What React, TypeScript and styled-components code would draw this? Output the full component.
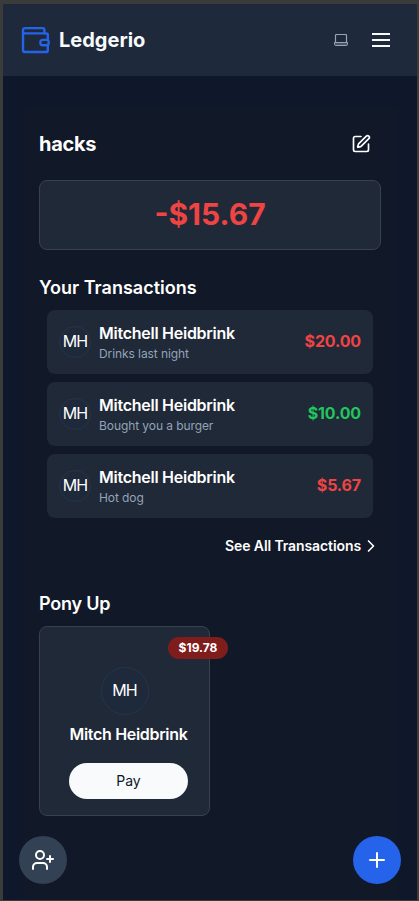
import React from "react";
import styled, { createGlobalStyle } from "styled-components";
import { ChevronRight, Plus, SquarePen, UserPlus } from "lucide-react";

const GlobalStyle = createGlobalStyle`
  * { box-sizing: border-box; }
  body { margin: 0; background: #3b3b3b; font-family: Inter, "Liberation Sans", sans-serif; color: #f8fafc; }
  button { font: inherit; border: 0; padding: 0; color: inherit; background: none; cursor: pointer; }
  h1, h2, p { margin: 0; }
`;

const Frame = styled.div`
  height: 901px;
  padding: 4px 2px 1px 3px;
  overflow: hidden;
`;

const Page = styled.div`
  height: 896px;
  background: #0f172a;
  display: flex;
  flex-direction: column;
`;

const Header = styled.header`
  flex: none;
  height: 72px;
  padding: 0 27px 0 18px;
  background: #1e293b;
  display: flex;
  align-items: center;
  justify-content: space-between;
`;

const Brand = styled.div`
  display: flex;
  align-items: center;
  gap: 9px;
`;

const Label = styled.span<{ $size: number; $weight?: number; $spacing?: number; $line?: number; $color?: string }>`
  display: block;
  white-space: nowrap;
  font-size: ${(p) => p.$size}px;
  font-weight: ${(p) => p.$weight ?? 400};
  letter-spacing: ${(p) => p.$spacing ?? 0}px;
  line-height: ${(p) => p.$line ?? 24}px;
  color: ${(p) => p.$color ?? "#ffffff"};
`;

const HeaderTools = styled.div`
  display: flex;
  align-items: center;
  gap: 24px;
`;

const Panel = styled.main`
  flex: 1;
  margin: 32px 20px 0;
  padding: 20px 16px 0;
  background: #111827;
`;

const TitleRow = styled.div`
  display: flex;
  align-items: center;
  justify-content: space-between;
  height: 32px;
  padding-right: 10px;
`;

const Balance = styled.div`
  height: 70px;
  margin-top: 20px;
  padding-bottom: 2px;
  border: 1px solid #374151;
  border-radius: 8px;
  background: #1f2937;
  display: flex;
  align-items: center;
  justify-content: center;
`;

const Section = styled.section<{ $gap: number }>`
  margin-top: ${(p) => p.$gap}px;
`;

const TransactionList = styled.div`
  margin-top: 8px;
  padding: 0 8px;
  display: grid;
  gap: 8px;
`;

const Transaction = styled.div`
  height: 64px;
  padding: 0 12px;
  border-radius: 8px;
  background: #1f2937;
  display: flex;
  align-items: center;
  gap: 8px;
`;

const TransactionText = styled.div`
  flex: 1;
  display: grid;
  gap: 1px;
  padding-bottom: 2px;
`;

const Amount = styled(Label)`
  padding-bottom: 2px;
`;

const Avatar = styled.div<{ $size: number }>`
  flex: none;
  width: ${(p) => p.$size}px;
  height: ${(p) => p.$size}px;
  padding-bottom: 2px;
  border-radius: 50%;
  border: 1px solid #283545;
  background: #1e293b;
  display: flex;
  align-items: center;
  justify-content: center;
`;

const SeeAll = styled.button`
  display: flex;
  align-items: center;
  margin: 18px 0 0 auto;
  height: 20px;
`;

const PayCard = styled.div`
  position: relative;
  width: 171px;
  height: 190px;
  margin-top: 8px;
  padding: 40px 21px 0 29px;
  border: 1px solid #374151;
  border-radius: 8px;
  background: #1f2937;
  display: flex;
  flex-direction: column;
  align-items: center;
`;

const PayAvatar = styled(Avatar)`
  margin: 0 8px 7px 0;
`;

const Badge = styled.div`
  position: absolute;
  top: 10px;
  right: -19px;
  width: 60px;
  height: 22px;
  border-radius: 11px;
  background: #7f1d1d;
  display: flex;
  align-items: center;
  justify-content: center;
`;

const PayButton = styled.button`
  width: 119px;
  height: 36px;
  margin-top: 17px;
  border-radius: 18px;
  background: #f8fafc;
  display: flex;
  align-items: center;
  justify-content: center;
`;

const Fab = styled.button<{ $side: "left" | "right" }>`
  position: fixed;
  bottom: 17px;
  ${(p) => (p.$side === "left" ? "left: 19px;" : "right: 18px;")}
  width: 48px;
  height: 48px;
  border-radius: 50%;
  background: ${(p) => (p.$side === "left" ? "#334155" : "#2563eb")};
  display: flex;
  align-items: center;
  justify-content: center;
`;

const WalletIcon = () => (
  <svg width="29" height="28" viewBox="0 0 29 28" fill="none" stroke="#2563eb" strokeWidth="2.4" strokeLinejoin="round" strokeLinecap="round">
    <path d="M23.4 7.2V3.8a1.7 1.7 0 0 0-1.7-1.7H4A2 2 0 0 0 2 4.1V24a2 2 0 0 0 2 2h21.2a1.6 1.6 0 0 0 1.6-1.6V19.8" />
    <path d="M2 7.4h23.2a1.6 1.6 0 0 1 1.6 1.6V13.6" />
    <rect x="19.4" y="13.9" width="8.3" height="5.4" rx="2.3" />
  </svg>
);

const LaptopIcon = () => (
  <svg width="14" height="12" viewBox="0 0 14 12" fill="none" stroke="#94a3b8">
    <path d="M1.5 8.5V1.5a1 1 0 0 1 1-1h9a1 1 0 0 1 1 1v7" strokeWidth="1.2" />
    <path d="M.5 8.5h13v1.8a1.2 1.2 0 0 1-1.2 1.2H1.7A1.2 1.2 0 0 1 .5 10.3z" fill="#475569" />
  </svg>
);

const MenuIcon = () => (
  <svg width="18" height="14" viewBox="0 0 18 14" stroke="#f8fafc" strokeWidth="2">
    <path d="M0 1h18M0 7h18M0 13h18" />
  </svg>
);

const transactions = [
  { note: "Drinks last night", amount: "$20.00", color: "#ef4444" },
  { note: "Bought you a burger", amount: "$10.00", color: "#22c55e" },
  { note: "Hot dog", amount: "$5.67", color: "#ef4444" },
];

export default function App() {
  return (
    <Frame>
      <GlobalStyle />
      <Page>
        <Header>
          <Brand>
            <WalletIcon />
            <Label as="h1" $size={20} $weight={700} $line={28} $color="#f8fafc">Ledgerio</Label>
          </Brand>
          <HeaderTools>
            <LaptopIcon />
            <MenuIcon />
          </HeaderTools>
        </Header>
        <Panel>
          <TitleRow>
            <Label as="h2" $size={20} $weight={700} $spacing={-0.3} $line={28}>hacks</Label>
            <SquarePen size={20} color="#fff" />
          </TitleRow>
          <Balance>
            <Label $size={30} $weight={700} $line={36} $color="#ef4444">-$15.67</Label>
          </Balance>
          <Section $gap={24}>
            <Label as="h2" $size={18} $weight={600} $line={28}>Your Transactions</Label>
            <TransactionList>
              {transactions.map((t) => (
                <Transaction key={t.note}>
                  <Avatar $size={32}><Label $size={16} $spacing={-0.8}>MH</Label></Avatar>
                  <TransactionText>
                    <Label $size={16} $weight={600} $spacing={-0.26}>Mitchell Heidbrink</Label>
                    <Label $size={12} $line={16} $spacing={-0.08} $color="#94a3b8">{t.note}</Label>
                  </TransactionText>
                  <Amount $size={16} $weight={700} $spacing={-0.15} $color={t.color}>{t.amount}</Amount>
                </Transaction>
              ))}
            </TransactionList>
            <SeeAll>
              <Label $size={14} $weight={600} $spacing={-0.1} $line={20}>See All Transactions</Label>
              <ChevronRight size={20} color="#fff" />
            </SeeAll>
          </Section>
          <Section $gap={34}>
            <Label as="h2" $size={18} $weight={600} $spacing={-0.2} $line={28}>Pony Up</Label>
            <PayCard>
              <Badge><Label $size={12} $weight={700} $line={16}>$19.78</Label></Badge>
              <PayAvatar $size={48}><Label $size={16} $spacing={-0.8}>MH</Label></PayAvatar>
              <Label $size={16} $weight={600} $spacing={-0.32}>Mitch Heidbrink</Label>
              <PayButton><Label $size={14} $color="#0f172a" $line={20}>Pay</Label></PayButton>
            </PayCard>
          </Section>
        </Panel>
        <Fab $side="left"><UserPlus size={24} color="#fff" /></Fab>
        <Fab $side="right"><Plus size={24} color="#fff" /></Fab>
      </Page>
    </Frame>
  );
}
